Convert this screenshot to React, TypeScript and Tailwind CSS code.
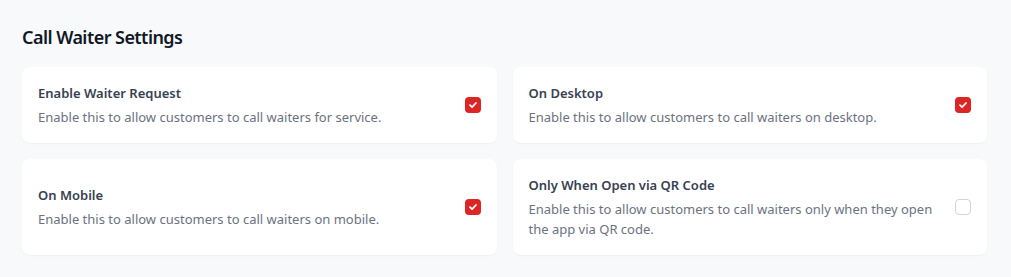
import React from "react";

type Item = { title: string; desc: string; checked: boolean };

const items: Item[] = [
  { title: "Enable Waiter Request", desc: "Enable this to allow customers to call waiters for service.", checked: true },
  { title: "On Desktop", desc: "Enable this to allow customers to call waiters on desktop.", checked: true },
  { title: "On Mobile", desc: "Enable this to allow customers to call waiters on mobile.", checked: true },
  { title: "Only When Open via QR Code", desc: "Enable this to allow customers to call waiters only when they open the app via QR code.", checked: false },
];

function Check({ checked }: { checked: boolean }) {
  if (!checked) {
    return <div className="w-4 h-4 shrink-0 rounded-[4px] border border-[#d1d5db] bg-white" />;
  }
  return (
    <div className="w-4 h-4 shrink-0 rounded-[4px] bg-[#dc2626] flex items-center justify-center">
      <svg width="10" height="10" viewBox="0 0 10 10" fill="none">
        <path d="M2 5.2 L4.1 7.2 L8 3" stroke="white" strokeWidth="1.8" strokeLinecap="round" strokeLinejoin="round" />
      </svg>
    </div>
  );
}

export default function App() {
  return (
    <div className="w-[1011px] h-[277px] bg-[#f8f9fb] pl-[22px] pr-[24px] pt-[25px]" style={{ fontFamily: '"Noto Sans", "Open Sans", sans-serif' }}>
      <h2 className="text-[18px] leading-[24px] font-semibold tracking-[-0.55px] text-[#111827] mb-[18px]">Call Waiter Settings</h2>
      <div className="grid grid-cols-2 gap-4">
        {items.map((it) => (
          <div key={it.title} className="bg-white rounded-[8px] shadow-[0_1px_2px_rgba(0,0,0,0.04)] px-4 py-4 flex items-center gap-4">
            <div className="flex-1 min-w-0">
              <div className="text-[13px] leading-[20px] font-semibold text-[#374151]">{it.title}</div>
              <div className="text-[13px] leading-[20px] text-[#6b7280] mt-1">{it.desc}</div>
            </div>
            <Check checked={it.checked} />
          </div>
        ))}
      </div>
    </div>
  );
}
